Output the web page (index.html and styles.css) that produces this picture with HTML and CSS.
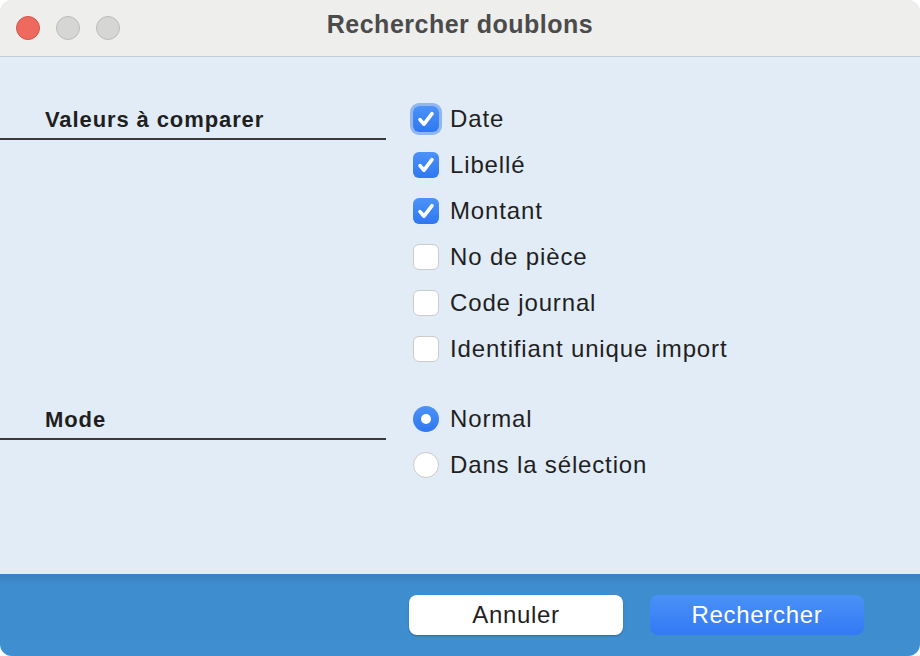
FILE: index.html
```html
<!DOCTYPE html>
<html lang="fr">
<head>
<meta charset="utf-8">
<title>Rechercher doublons</title>
<link rel="stylesheet" href="styles.css">
</head>
<body>
<div class="window">
  <header class="titlebar">
    <div class="lights">
      <span class="light red"></span>
      <span class="light gray"></span>
      <span class="light gray"></span>
    </div>
    <div class="title">Rechercher doublons</div>
  </header>
  <main class="content">
    <section class="group">
      <div class="label">Valeurs à comparer</div>
      <div class="options">
        <label class="opt"><span class="cb on focus"><svg viewBox="0 0 26 26"><path d="M7 13.6l4 4.6 8-10.6" /></svg></span>Date</label>
        <label class="opt"><span class="cb on"><svg viewBox="0 0 26 26"><path d="M7 13.6l4 4.6 8-10.6" /></svg></span>Libellé</label>
        <label class="opt"><span class="cb on"><svg viewBox="0 0 26 26"><path d="M7 13.6l4 4.6 8-10.6" /></svg></span>Montant</label>
        <label class="opt"><span class="cb"></span>No de pièce</label>
        <label class="opt"><span class="cb"></span>Code journal</label>
        <label class="opt"><span class="cb"></span>Identifiant unique import</label>
      </div>
    </section>
    <section class="group">
      <div class="label">Mode</div>
      <div class="options">
        <label class="opt"><span class="rb on"></span>Normal</label>
        <label class="opt"><span class="rb"></span>Dans la sélection</label>
      </div>
    </section>
  </main>
  <footer class="footer">
    <button class="btn cancel">Annuler</button>
    <button class="btn primary">Rechercher</button>
  </footer>
</div>
</body>
</html>
```
FILE: styles.css
```css
html, body {
  margin: 0;
  padding: 0;
  background: #ffffff;
}
body {
  font-family: "Liberation Sans", Arial, Helvetica, sans-serif;
  color: #1f1f1f;
}
.window {
  width: 920px;
  height: 656px;
  border-radius: 12px;
  overflow: hidden;
  display: flex;
  flex-direction: column;
  background: #e2ecf6;
}
.titlebar {
  height: 56px;
  flex: none;
  background: #eeeeec;
  border-bottom: 1px solid #c3cdd7;
  display: grid;
  grid-template-columns: 1fr;
  align-items: center;
}
.titlebar > * {
  grid-row: 1;
  grid-column: 1;
}
.lights {
  display: flex;
  gap: 16px;
  padding-left: 16px;
  align-self: center;
}
.light {
  width: 24px;
  height: 24px;
  border-radius: 50%;
  box-sizing: border-box;
}
.light.red {
  background: #ee6a5e;
  border: 1px solid #d4554b;
}
.light.gray {
  background: #d6d6d4;
  border: 1px solid #bcbcba;
}
.title {
  justify-self: center;
  font-size: 25px;
  font-weight: bold;
  color: #4b4b4b;
  letter-spacing: 0.5px;
  margin-top: -8px;
}
.content {
  flex: 1;
  padding-top: 39px;
  display: flex;
  flex-direction: column;
  gap: 24px;
}
.group {
  display: grid;
  grid-template-columns: 386px 1fr;
  column-gap: 27px;
  align-items: start;
}
.label {
  box-sizing: border-box;
  height: 44px;
  padding-top: 11px;
  padding-left: 45px;
  border-bottom: 2px solid #3a3a3a;
  font-size: 22px;
  font-weight: bold;
  letter-spacing: 0.9px;
  color: #1f1f1f;
}
.options {
  display: flex;
  flex-direction: column;
}
.opt {
  height: 46px;
  display: flex;
  align-items: center;
  gap: 11px;
  font-size: 24px;
  letter-spacing: 0.85px;
  color: #1f1f1f;
}
.cb {
  width: 26px;
  height: 26px;
  box-sizing: border-box;
  border-radius: 6px;
  background: #ffffff;
  border: 1px solid #cbcbcb;
  flex: none;
  display: flex;
}
.cb.on {
  border: none;
  background: linear-gradient(#4c92f8, #2f77f1);
}
.cb.focus {
  box-shadow: 0 0 0 3px rgba(80, 140, 235, 0.55);
}
.cb svg {
  width: 26px;
  height: 26px;
}
.cb svg path {
  fill: none;
  stroke: #ffffff;
  stroke-width: 3.6;
  stroke-linecap: round;
  stroke-linejoin: round;
}
.rb {
  width: 26px;
  height: 26px;
  box-sizing: border-box;
  border-radius: 50%;
  background: #ffffff;
  border: 1px solid #cbcbcb;
  flex: none;
  display: flex;
  align-items: center;
  justify-content: center;
}
.rb.on {
  border: none;
  background: linear-gradient(#4c92f8, #2f77f1);
}
.rb.on::after {
  content: "";
  width: 10px;
  height: 10px;
  border-radius: 50%;
  background: #ffffff;
}
.footer {
  height: 82px;
  flex: none;
  background: linear-gradient(#3a80bf 0px, #3e8dce 10px, #3f8ecf 100%);
  display: flex;
  align-items: center;
  justify-content: flex-end;
  gap: 27px;
  padding-right: 56px;
}
.btn {
  width: 214px;
  height: 40px;
  border-radius: 8px;
  border: none;
  font-family: "Liberation Sans", Arial, Helvetica, sans-serif;
  font-size: 24px;
  letter-spacing: 0.7px;
  padding: 0;
}
.btn.cancel {
  background: #ffffff;
  color: #1f1f1f;
  box-shadow: 0 1px 2px rgba(0, 0, 0, 0.25);
}
.btn.primary {
  background: linear-gradient(#4a91f7, #3479f5);
  color: #ffffff;
}
```
